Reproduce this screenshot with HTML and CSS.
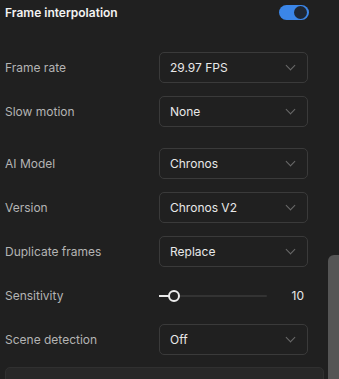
FILE: index.html
```html
<!DOCTYPE html>
<html lang="en">
<head>
    <meta charset="UTF-8">
    <title>Frame interpolation</title>
    <link rel="stylesheet" href="styles.css">
</head>
<body>
    <div class="panel">
        <header class="panel-header">
            <h1>Frame interpolation</h1>
            <span class="toggle on"><span class="toggle-knob"></span></span>
        </header>

        <div class="group">
            <div class="row">
                <span class="label">Frame rate</span>
                <div class="select">29.97 FPS<span class="chevron"></span></div>
            </div>
            <div class="row">
                <span class="label">Slow motion</span>
                <div class="select">None<span class="chevron"></span></div>
            </div>
        </div>

        <div class="group">
            <div class="row">
                <span class="label">AI Model</span>
                <div class="select">Chronos<span class="chevron"></span></div>
            </div>
            <div class="row">
                <span class="label">Version</span>
                <div class="select">Chronos V2<span class="chevron"></span></div>
            </div>
            <div class="row">
                <span class="label">Duplicate frames</span>
                <div class="select">Replace<span class="chevron"></span></div>
            </div>
            <div class="row">
                <span class="label">Sensitivity</span>
                <div class="slider-field">
                    <div class="slider">
                        <span class="slider-fill"></span>
                        <span class="slider-thumb"></span>
                    </div>
                    <span class="slider-value">10</span>
                </div>
            </div>
            <div class="row">
                <span class="label">Scene detection</span>
                <div class="select">Off<span class="chevron"></span></div>
            </div>
        </div>

        <div class="next-card"></div>
    </div>
    <div class="scroll-thumb"></div>
</body>
</html>
```

FILE: styles.css
```css
:root {
    --bg-color: #202020;
    --border-color: #3a3a3a;
    --label-color: #b4b4b4;
    --text-color: #e8e8e8;
    --accent-color: #3b86e8;
}

* {
    margin: 0;
    padding: 0;
    box-sizing: border-box;
    font-family: Inter, 'Noto Sans', sans-serif;
}

html, body {
    height: 100%;
    overflow: hidden;
}

body {
    background: var(--bg-color);
    font-size: 12px;
    position: relative;
}

.panel {
    padding: 0 16px 0 5px;
}

.panel-header {
    height: 24px;
    display: flex;
    align-items: center;
    justify-content: space-between;
    padding-right: 14px;
}

.panel-header h1 {
    font-size: 12px;
    font-weight: 600;
    color: #f2f2f2;
}

.toggle {
    width: 30px;
    height: 15px;
    border-radius: 8px;
    background: var(--accent-color);
    display: flex;
    align-items: center;
    justify-content: flex-end;
    padding-right: 2px;
}

.toggle-knob {
    width: 13px;
    height: 13px;
    border-radius: 50%;
    background: #1f2733;
}

.group {
    display: flex;
    flex-direction: column;
    gap: 13px;
    margin-top: 21px;
}

.group:first-of-type {
    margin-top: 28px;
}

.row {
    display: grid;
    grid-template-columns: 154px 149px;
    align-items: center;
    height: 31px;
}

.label {
    color: var(--label-color);
}

.select {
    height: 31px;
    border: 1px solid var(--border-color);
    border-radius: 5px;
    display: flex;
    align-items: center;
    justify-content: space-between;
    padding: 0 11px 0 10px;
    color: var(--text-color);
}

.chevron {
    width: 7px;
    height: 7px;
    border-right: 1.3px solid #6a6a6a;
    border-bottom: 1.3px solid #6a6a6a;
    transform: rotate(45deg);
    margin-top: -4px;
    margin-right: 2px;
}

.slider-field {
    display: flex;
    align-items: center;
    justify-content: space-between;
    padding-right: 4px;
}

.slider {
    position: relative;
    width: 108px;
    height: 2px;
    background: #333;
    border-radius: 1px;
}

.slider-fill {
    position: absolute;
    left: 0;
    top: 0;
    width: 14px;
    height: 2px;
    background: #e8e8e8;
}

.slider-thumb {
    position: absolute;
    left: 9px;
    top: -5px;
    width: 12px;
    height: 12px;
    border-radius: 50%;
    border: 2px solid #ececec;
    background: #222;
}

.slider-value {
    color: var(--text-color);
}

.next-card {
    margin-top: 12px;
    height: 40px;
    margin-right: -1px;
    background: #282828;
    border: 1px solid #303030;
    border-radius: 5px;
}

.scroll-thumb {
    position: absolute;
    right: 0;
    top: 255px;
    width: 11px;
    height: 140px;
    background: #555;
    border-radius: 6px 0 0 0;
}
```
